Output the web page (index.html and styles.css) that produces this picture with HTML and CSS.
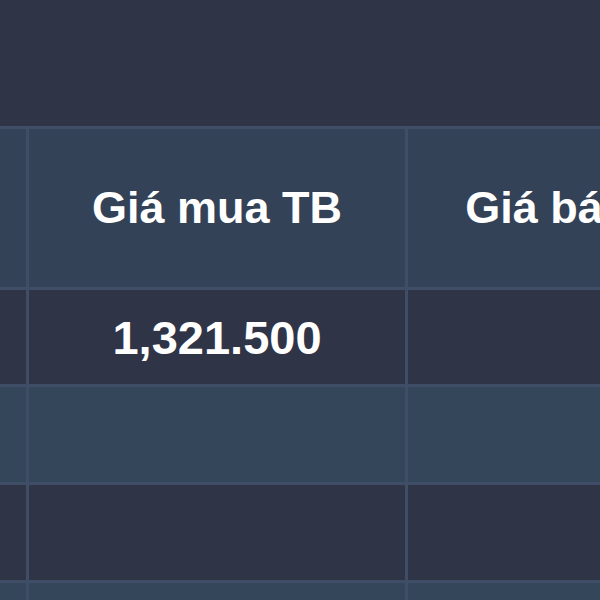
FILE: index.html
```html
<!DOCTYPE html>
<html lang="vi">
<head>
    <meta charset="UTF-8">
    <title>Danh mục</title>
    <link rel="stylesheet" href="styles.css">
</head>
<body>
    <div class="toolbar"></div>
    <div class="table">
        <div class="cell head"></div>
        <div class="cell head">Giá mua TB</div>
        <div class="cell head">Giá bán TB</div>
        <div class="cell head"></div>

        <div class="cell"></div>
        <div class="cell">1,321.500</div>
        <div class="cell"></div>
        <div class="cell"></div>

        <div class="cell alt"></div>
        <div class="cell alt"></div>
        <div class="cell alt"></div>
        <div class="cell alt"></div>

        <div class="cell"></div>
        <div class="cell"></div>
        <div class="cell"></div>
        <div class="cell"></div>

        <div class="cell alt"></div>
        <div class="cell alt"></div>
        <div class="cell alt"></div>
        <div class="cell alt"></div>
    </div>
</body>
</html>
```

FILE: styles.css
```css
* {
    margin: 0;
    padding: 0;
    box-sizing: border-box;
}

body {
    font-family: 'Liberation Sans', Arial, sans-serif;
    background-color: #2f3446;
    width: 600px;
    height: 600px;
    overflow: hidden;
}

.toolbar {
    height: 126px;
}

.table {
    display: grid;
    grid-template-columns: 26px 376px 352px 200px;
    grid-template-rows: 158px 94px 95px 95px 95px;
    gap: 3px;
    padding-top: 3px;
    background-color: #3f4d67;
    width: max-content;
}

.cell {
    background-color: #2f3447;
    color: #ffffff;
    font-size: 47px;
    font-weight: bold;
    display: flex;
    align-items: center;
    justify-content: center;
    white-space: nowrap;
}

.cell.head {
    background-color: #334257;
    font-size: 45px;
}

.cell.alt {
    background-color: #34465a;
}
```
